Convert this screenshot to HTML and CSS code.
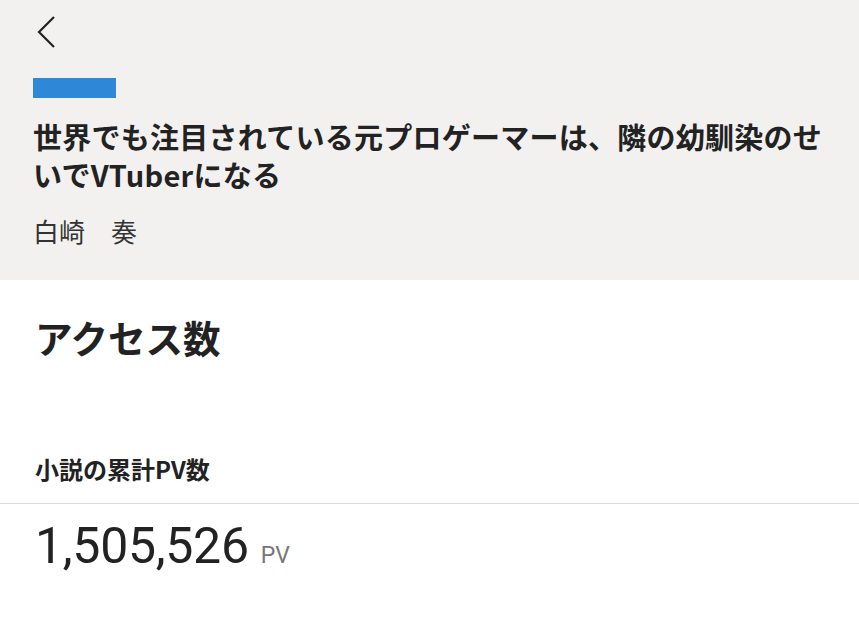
FILE: index.html
```html
<!DOCTYPE html>
<html lang="ja">
<head>
<meta charset="utf-8">
<link rel="stylesheet" href="styles.css">
</head>
<body>
<header class="head">
  <div class="back">
    <svg width="20" height="32" viewBox="0 0 20 32"><polyline points="18,1 3,16 18,31" fill="none" stroke="#222" stroke-width="2.2"/></svg>
  </div>
  <div class="tag"></div>
  <h1 class="title">世界でも注目されている元プロゲーマーは、隣の幼馴染のせいでVTuberになる</h1>
  <div class="author">白崎　奏</div>
</header>
<main class="body">
  <h2 class="section">アクセス数</h2>
  <div class="label">小説の累計PV数</div>
  <div class="value"><span class="num">1,505,526</span><span class="unit">PV</span></div>
</main>
</body>
</html>
```
FILE: styles.css
```css
html, body { margin: 0; padding: 0; background: #fff; }
body { font-family: "Noto Sans CJK JP", "Noto Sans", sans-serif; color: #222; width: 859px; }
.head { background: #f2f1f0; padding: 16px 33px 32px 33px; height: 280px; box-sizing: border-box; }
.back { display: flex; padding-left: 3px; height: 32px; }
.back svg { display: block; }
.tag { width: 83px; height: 20px; background: #2f87d8; margin-top: 30px; }
.title { font-size: 29px; line-height: 38px; font-weight: 700; letter-spacing: 0.25px; margin: 19px 0 0 0; color: #222; }
.author { font-size: 26px; line-height: 35px; margin-top: 20px; color: #333; }
.body { padding: 32px 0 0 0; }
.section { font-size: 37.5px; line-height: 50px; font-weight: 700; margin: 0 0 92px 35px; }
.label { font-size: 24px; line-height: 30px; font-weight: 700; padding: 0 0 19px 35px; border-bottom: 1px solid #d9d9d9; }
.value { padding: 12px 0 0 35px; display: flex; align-items: baseline; gap: 12px; }
.num { font-family: Roboto, sans-serif; font-size: 50px; line-height: 60px; letter-spacing: -0.3px; color: #222; }
.unit { font-family: Roboto, sans-serif; font-size: 23px; color: #777; }
```
